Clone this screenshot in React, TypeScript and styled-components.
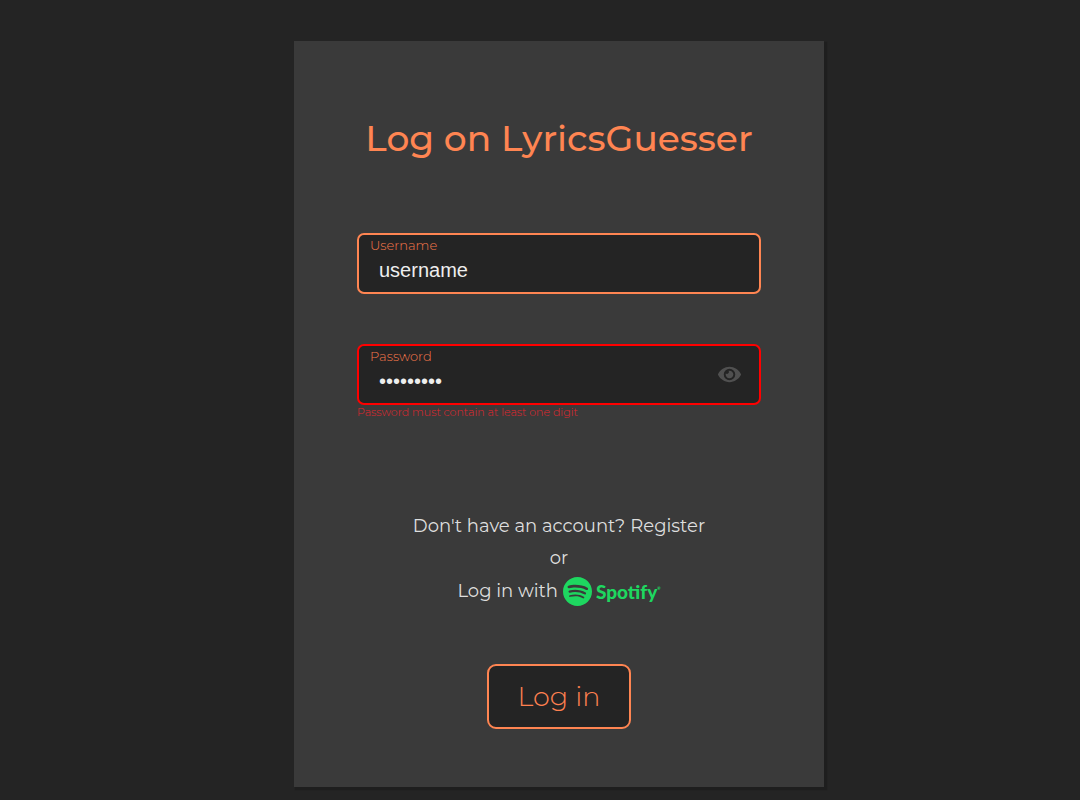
import React, { useState } from "react";
import styled, { createGlobalStyle } from "styled-components";
import { FaEye } from "react-icons/fa";

const GlobalStyle = createGlobalStyle`
  *, *::before, *::after { box-sizing: border-box; }
  body {
    margin: 0;
    background: #242424;
    color: #dedede;
    font-family: Montserrat, Inter, "Open Sans", sans-serif;
  }
`;

const Page = styled.main`
  display: flex;
  justify-content: center;
  padding: 41px 0 13px 38px;
`;

const Card = styled.form`
  display: flex;
  flex-direction: column;
  align-items: center;
  width: 100%;
  max-width: 530px;
  padding: 72px 63px 58px;
  background: #3a3a3a;
  box-shadow: 2px 2px 1px 1px #1e1e1e;
`;

const Title = styled.h1`
  margin: 0 0 70px;
  color: #ff8552;
  font-size: 36px;
  line-height: 50px;
  font-weight: 500;
  white-space: nowrap;
`;

const Field = styled.div`
  width: 100%;
  height: 111px;
`;

const FieldBox = styled.div<{ $invalid?: boolean }>`
  display: grid;
  grid-template-columns: 1fr auto;
  grid-template-rows: 20px 1fr;
  height: 61px;
  padding: 0 18px 0 11px;
  border: 2px solid ${(p) => (p.$invalid ? "#f00" : "#ff8552")};
  border-radius: 7px;
  background: #242424;
`;

const Label = styled.label`
  color: #f4774b;
  font-size: 13px;
  font-weight: 300;
  line-height: 20px;
`;

const Input = styled.input`
  grid-row: 2;
  min-width: 0;
  height: 31px;
  padding: 0 9px;
  border: 0;
  outline: 0;
  background: transparent;
  color: #eee;
  font: 20px "Liberation Sans", Arial, sans-serif;
`;

const EyeButton = styled.button`
  grid-column: 2;
  grid-row: 1 / 3;
  display: flex;
  align-items: center;
  padding: 0;
  border: 0;
  background: transparent;
  color: #505050;
  font-size: 23px;
`;

const ErrorText = styled.p`
  margin: 0;
  color: #e3262e;
  font-size: 11px;
  font-weight: 300;
  line-height: 15px;
`;

const Options = styled.div`
  display: flex;
  flex-direction: column;
  align-items: center;
  margin: 55px 0 57px;
  font-size: 18px;
  line-height: 32px;
`;

const Line = styled.p`
  display: flex;
  align-items: center;
  gap: 5px;
  margin: 0;
`;

const TextLink = styled.a`
  color: inherit;
  text-decoration: none;
`;

const SpotifyLink = styled(TextLink)`
  display: flex;
  align-items: center;
  gap: 4px;
  height: 33px;
  padding-top: 2px;
  color: #1ed760;
  font-family: Lato, sans-serif;
  font-size: 19px;
  font-weight: 900;
`;

const Mark = styled.sup`
  align-self: flex-start;
  margin-left: -4px;
  padding-top: 11px;
  font-size: 4px;
  line-height: 4px;
`;

const Submit = styled.button`
  width: 144px;
  height: 65px;
  padding: 0;
  border: 2px solid #ff8552;
  border-radius: 9px;
  background: #242424;
  color: #ff8050;
  font-family: inherit;
  font-size: 27px;
  font-weight: 300;
`;

function SpotifyIcon() {
  return (
    <svg width="29" height="29" viewBox="0 0 24 24" fill="currentColor" aria-hidden="true">
      <path d="M12 0C5.4 0 0 5.4 0 12s5.4 12 12 12 12-5.4 12-12S18.66 0 12 0zm5.521 17.34c-.24.359-.66.48-1.021.24-2.82-1.74-6.36-2.101-10.561-1.141-.418.122-.779-.179-.899-.539-.12-.421.18-.78.54-.9 4.56-1.021 8.52-.6 11.64 1.32.42.18.479.659.301 1.02zm1.44-3.3c-.301.42-.841.6-1.262.3-3.239-1.98-8.159-2.58-11.939-1.38-.479.12-1.02-.12-1.14-.6-.12-.48.12-1.021.6-1.141C9.6 9.9 15 10.561 18.72 12.84c.361.181.54.78.241 1.2zm.12-3.36C15.24 8.4 8.82 8.16 5.16 9.301c-.6.179-1.2-.181-1.38-.721-.18-.601.18-1.2.72-1.381 4.26-1.26 11.28-1.02 15.721 1.621.539.3.719 1.02.419 1.56-.299.421-1.02.599-1.559.3z" />
    </svg>
  );
}

export default function App() {
  const [username, setUsername] = useState("username");
  const [password, setPassword] = useState("passwords");
  const [visible, setVisible] = useState(false);

  return (
    <>
      <GlobalStyle />
      <Page>
        <Card onSubmit={(e: React.FormEvent) => e.preventDefault()}>
          <Title>Log on LyricsGuesser</Title>
          <Field>
            <FieldBox>
              <Label htmlFor="username">Username</Label>
              <Input id="username" value={username} onChange={(e) => setUsername(e.target.value)} />
            </FieldBox>
          </Field>
          <Field>
            <FieldBox $invalid>
              <Label htmlFor="password">Password</Label>
              <Input
                id="password"
                type={visible ? "text" : "password"}
                value={password}
                aria-describedby="password-error"
                onChange={(e) => setPassword(e.target.value)}
              />
              <EyeButton type="button" aria-label="Show password" onClick={() => setVisible(!visible)}>
                <FaEye />
              </EyeButton>
            </FieldBox>
            <ErrorText id="password-error">Password must contain at least one digit</ErrorText>
          </Field>
          <Options>
            <Line>
              Don't have an account? <TextLink href="#register">Register</TextLink>
            </Line>
            <Line>or</Line>
            <Line>
              Log in with
              <SpotifyLink href="#spotify">
                <SpotifyIcon />
                Spotify
                <Mark>®</Mark>
              </SpotifyLink>
            </Line>
          </Options>
          <Submit type="submit">Log in</Submit>
        </Card>
      </Page>
    </>
  );
}
